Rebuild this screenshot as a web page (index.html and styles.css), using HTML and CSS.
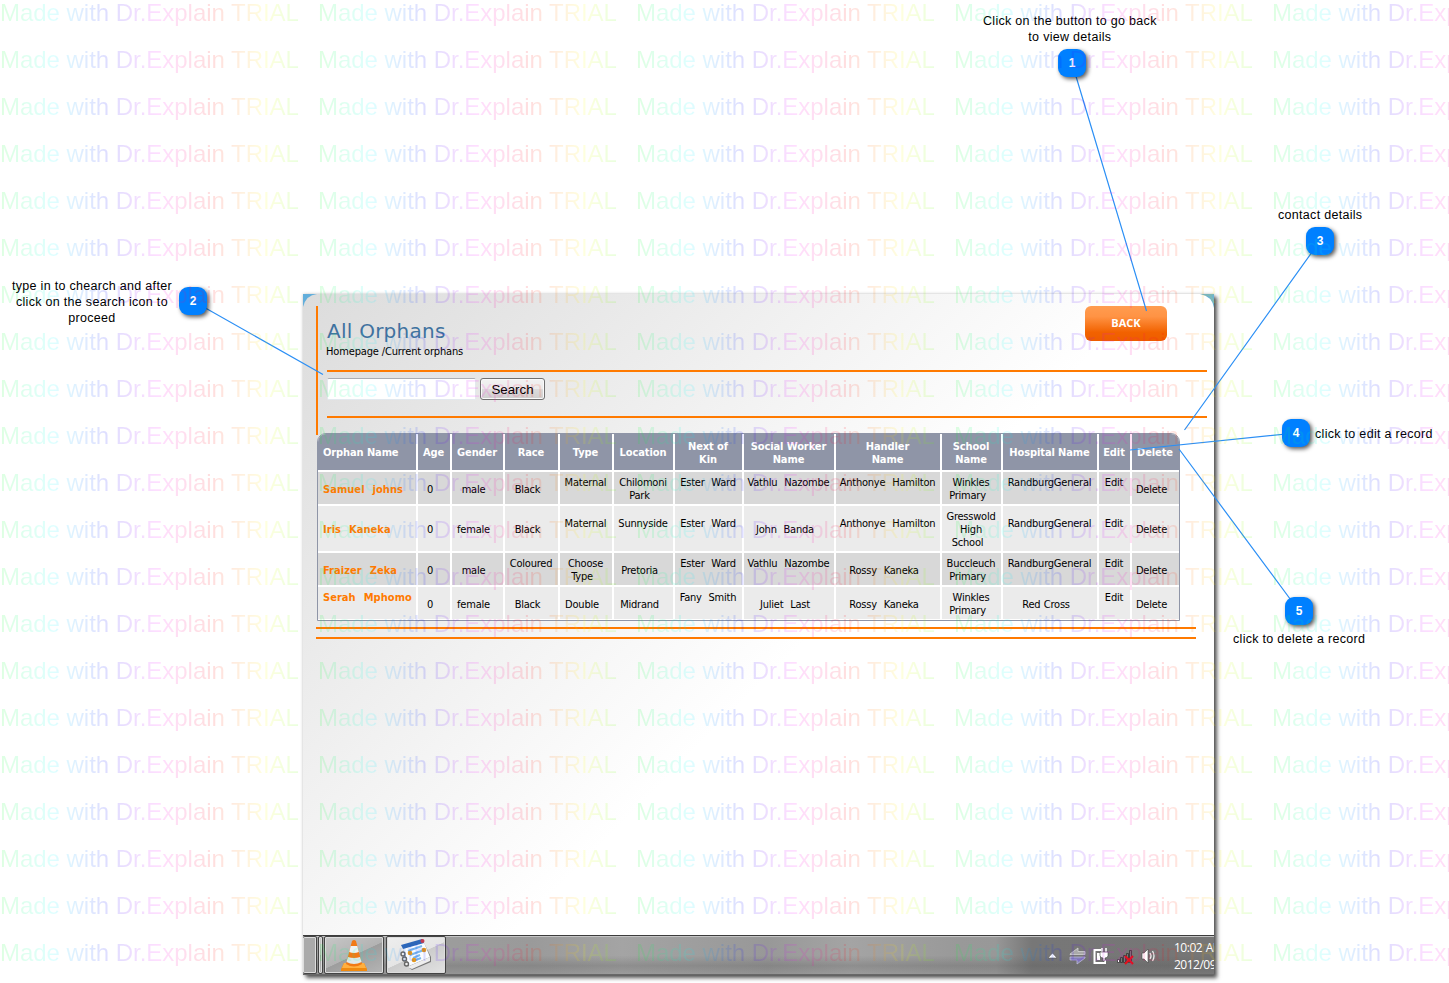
FILE: index.html
```html
<!DOCTYPE html>
<html lang="en">
<head>
<meta charset="utf-8">
<title>All Orphans</title>
<link rel="stylesheet" href="styles.css">
</head>
<body>
<main class="window">
  <svg class="corner" width="14" height="14" viewBox="0 0 14 14"><path d="M0 0H14Q3 1 0 13Z" fill="#62aedb"/></svg>
  <svg class="corner corner-right" width="14" height="14" viewBox="0 0 14 14"><path d="M0 0H14V14Q12 2 0 0Z" fill="#6db4d0"/></svg>
  <div class="content">
    <section class="head">
      <div class="title-row">
        <div>
          <h1>All Orphans</h1>
          <p class="crumbs">Homepage /Current orphans</p>
        </div>
        <button class="back">BACK</button>
      </div>
      <form class="search">
        <input class="query" type="text" aria-label="Search">
        <button class="go" type="button">Search</button>
      </form>
    </section>
    <section class="grid">
      <div class="th left"><b class="w1">Orphan Name</b></div><div class="th"><b>Age</b></div><div class="th"><b>Gender</b></div><div class="th"><b>Race</b></div><div class="th"><b>Type</b></div><div class="th"><b>Location</b></div><div class="th"><b>Next of<br>Kin</b></div><div class="th"><b>Social Worker<br>Name</b></div><div class="th"><b>Handler<br>Name</b></div><div class="th"><b>School<br>Name</b></div><div class="th"><b>Hospital Name</b></div><div class="th"><b>Edit</b></div><div class="th"><b>Delete</b></div>

      <div class="td one left name"><span>Samuel  johns</span></div><div class="td one"><i>0</i></div><div class="td one"><i>male</i></div><div class="td one"><i>Black</i></div><div class="td two"><span>Maternal</span></div><div class="td"><span>Chilomoni</span><i>Park</i></div><div class="td two"><span>Ester  Ward</span></div><div class="td two"><span>Vathlu  Nazombe</span></div><div class="td two"><span>Anthonye  Hamilton</span></div><div class="td"><span>Winkles</span><i>Primary</i></div><div class="td two"><span>RandburgGeneral</span></div><div class="td two"><span>Edit</span></div><div class="td one"><i>Delete</i></div>

      <div class="td alt left name"><span>Iris  Kaneka</span></div><div class="td alt"><i>0</i></div><div class="td alt"><i>female</i></div><div class="td alt"><i>Black</i></div><div class="td alt two mid"><span>Maternal</span></div><div class="td alt two mid"><span>Sunnyside</span></div><div class="td alt two mid"><span>Ester  Ward</span></div><div class="td alt"><i>John  Banda</i></div><div class="td alt two mid"><span>Anthonye  Hamilton</span></div><div class="td alt"><span>Gresswold</span><span>High</span><i>School</i></div><div class="td alt two mid"><span>RandburgGeneral</span></div><div class="td alt two mid"><span>Edit</span></div><div class="td alt"><i>Delete</i></div>

      <div class="td one left name"><span>Fraizer  Zeka</span></div><div class="td one"><i>0</i></div><div class="td one"><i>male</i></div><div class="td two"><span>Coloured</span></div><div class="td"><span>Choose</span><i>Type</i></div><div class="td one"><i>Pretoria</i></div><div class="td two"><span>Ester  Ward</span></div><div class="td two"><span>Vathlu  Nazombe</span></div><div class="td one"><i>Rossy  Kaneka</i></div><div class="td"><span>Buccleuch</span><i>Primary</i></div><div class="td two"><span>RandburgGeneral</span></div><div class="td two"><span>Edit</span></div><div class="td one"><i>Delete</i></div>

      <div class="td alt left name two"><span>Serah  Mphomo</span></div><div class="td alt one"><i>0</i></div><div class="td alt one"><i>female</i></div><div class="td alt one"><i>Black</i></div><div class="td alt one"><i>Double</i></div><div class="td alt one"><i>Midrand</i></div><div class="td alt two"><span>Fany  Smith</span></div><div class="td alt one"><i>Juliet  Last</i></div><div class="td alt one"><i>Rossy  Kaneka</i></div><div class="td alt"><span>Winkles</span><i>Primary</i></div><div class="td alt one"><i>Red Cross</i></div><div class="td alt two"><span>Edit</span></div><div class="td alt one"><i>Delete</i></div>
    </section>
    <div class="rules"></div>
  </div>
  <footer class="taskbar">
    <div class="task sliver"></div>
    <div class="task thin"></div>
    <div class="task vlc">
      <svg width="28" height="32" viewBox="0 0 28 32">
        <path d="M4 24H24L27 30V32H1V30Z" fill="#f08a10"/><path d="M4 24H24L26 29H2Z" fill="#ffb040"/>
        <path d="M12 2Q14 0 16 2L22 25Q14 30 6 25Z" fill="#f17a16"/>
        <path d="M10.700 7H17.300L18.800 13Q14 15 9.200 13Z" fill="#eef2f2"/>
        <path d="M8 18Q14 20 20 18L21.600 23Q14 27 6.500 23Z" fill="#dfe8e8"/>
      </svg>
    </div>
    <div class="task active">
      <svg width="34" height="32" viewBox="0 0 34 32">
        <path d="M4 9L9 28L13 31L32 23V18L24 2Z" fill="#777"/>
        <path d="M8 28L31 18V22L13 30Z" fill="#eee"/>
        <path d="M3 7L24 1L31 18L10 27Z" fill="#fafcff"/>
        <path d="M2 6L23 0L25 4L4 10Z" fill="#2c66b8"/><circle cx="23.500" cy="2" r="2" fill="#c43a50"/>
        <path d="M9 12L23 7M11 16L25 11M14 19L21 16M14 22L22 19" stroke="#77b6ee" stroke-width="2"/>
        <circle cx="11" cy="14" r="2.300" fill="#e79a1c"/><circle cx="25" cy="11" r="2.300" fill="#e79a1c"/><circle cx="15" cy="21" r="2.300" fill="#e79a1c"/>
        <g fill="#eee" stroke="#666" stroke-width="1.400"><circle cx="4" cy="15" r="2"/><circle cx="5.500" cy="20" r="2"/><circle cx="7.500" cy="25" r="2"/></g>
      </svg>
    </div>
    <div class="tray">
      <svg width="110" height="18" viewBox="0 0 110 18">
        <path d="M0 11L4.500 6L9 11Z" fill="#fff" stroke="#555" stroke-width=".6"/>
        <path d="M22 7L30 1V4.500H37V7.500H22Z" fill="#a9a9a9" stroke="#ddd" stroke-width=".7"/>
        <path d="M37 10H22V13H29V17L37 11Z" fill="#8580b8" stroke="#c4c2e0" stroke-width=".7"/>
        <path d="M53 3H46.500V16H57V13" fill="none" stroke="#fff" stroke-width="2"/><path d="M49 6H52V13H49Z" fill="#fff"/>
        <path d="M54 1V5M58 1V5" stroke="#fff" stroke-width="1.500"/><path d="M52 5H60V9Q59 11 57 11V14H55V11Q53 11 52 9Z" fill="#fff" stroke="#444" stroke-width=".6"/>
        <g fill="#777" stroke="#333" stroke-width=".8"><path d="M69.500 12.500h2v3h-2z" fill="#fff"/><path d="M72.500 10.500h2v5h-2zM75.500 8.500h2v7h-2zM78.500 6.500h2v9h-2zM81.500 3.500h2v12h-2z"/></g>
        <path d="M77 9L85 17M85 9L77 17" stroke="#e3101c" stroke-width="2.200"/>
        <path d="M94 6H96L100 2V16L96 12H94Z" fill="#fff" stroke="#444" stroke-width=".6"/>
        <path d="M102 6Q104 9 102 12M104.500 4Q107.500 9 104.500 14" fill="none" stroke="#eee" stroke-width="1.300"/>
      </svg>
    </div>
    <div class="clock">10:02 AM<br>2012/09/12</div>
  </footer>
</main>

<svg class="leaders" width="1449" height="983" viewBox="0 0 1449 983">
  <path d="M1072 63L1146.500 311M193 301L323 374.500M1320 241L1184.500 430M1296 433L1130 450M1299 611L1179 449"/>
</svg>
<div class="badge b1">1</div><p class="note n1">Click on the button to go back<br>to view details</p>
<div class="badge b2">2</div><p class="note n2">type in to chearch and after<br>click on the search icon to<br>proceed</p>
<div class="badge b3">3</div><p class="note n3">contact details</p>
<div class="badge b4">4</div><p class="note n4">click to edit a record</p>
<div class="badge b5">5</div><p class="note n5">click to delete a record</p>
<div class="watermark" id="watermark" aria-hidden="true"></div>
<script src="script.js"></script>
</body>
</html>
```
FILE: styles.css
```css
* { box-sizing: border-box; }
html, body { margin: 0; height: 983px; overflow: hidden; background: #fff; }
body { position: relative; padding: 294px 0 0 303px; }
p, h1 { margin: 0; font-weight: normal; }

.window {
  position: relative;
  display: flex;
  flex-direction: column;
  width: 911px;
  height: 681px;
  background: linear-gradient(135deg, #dcdcdc 0, #e8e8e8 210px, #fff 600px);
  box-shadow: 3px 3px 4px rgba(0, 0, 0, .65), 0 0 3px rgba(0, 0, 0, .2);
}
.corner { position: absolute; top: 0; left: 0; }
.corner-right { left: auto; right: 0; }

.content { flex: 1; padding: 12px 0 0 13px; }
.head { width: 891px; height: 129px; padding-left: 9px; border-left: 2px solid #ff7a00; }
.title-row { display: flex; justify-content: space-between; height: 64px; padding-right: 40px; }
h1 { padding-top: 13px; font: 20px/25px "DejaVu Sans", sans-serif; letter-spacing: .25px; color: #3f729f; }
.crumbs { margin-left: -1px; font: 11px/16px "DejaVu Sans Condensed", sans-serif; letter-spacing: -.15px; white-space: nowrap; }
.back {
  width: 82px; height: 35px; padding: 0 0 2px; border: 0; border-radius: 6px;
  background: linear-gradient(#ff9c50 0, #ff9344 30%, #f26200 75%, #ee5c00);
  color: #fff; font: bold 11px/33px "Open Sans", sans-serif;
}
.search {
  display: flex; gap: 4px; width: 880px; height: 48px; padding-top: 6px;
  border-top: 2px solid #ff7a00; border-bottom: 2px solid #ff7a00;
}
.query { width: 149px; height: 22px; padding: 0; border: 1px solid #e3e9ef; border-top-color: #abadb3; border-radius: 2px; background: #fff; }
.go {
  width: 65px; height: 22px; padding: 0; border: 1px solid #707070; border-radius: 3px;
  box-shadow: inset 0 0 0 1px #fafafa;
  background: linear-gradient(#f2f2f2 0, #ebebeb 49%, #dddddd 50%, #cfcfcf);
  color: #000; font: 13.300px/19px "Liberation Sans", sans-serif;
}

.grid {
  display: grid;
  grid-template-columns: 98px 32px 51px 53px 52px 59px 67px 90px 104px 59px 94px 31px 47px;
  grid-template-rows: 36px 32px 45px 32px 32px;
  gap: 2px;
  width: 863px;
  margin: -2px 0 0 1px;
  padding-bottom: 1px;
  border: 1px solid #8f95a7;
  border-radius: 9px 9px 0 0;
  background: #fff;
  overflow: hidden;
  font: 11px/13px "DejaVu Sans Condensed", sans-serif;
  letter-spacing: -.22px;
  word-spacing: .5px;
  white-space: pre;
}
.th, .td { display: flex; flex-direction: column; align-items: center; justify-content: center; text-align: center; }
.th { padding: 1px 1px 0 0; background: #8f95a7; color: #fff; letter-spacing: -.1px; word-spacing: 0; }
.td { padding: 1px 1px 0 0; background: #d8d8d8; }
.td.alt { background: #ebebeb; }
.td i { padding-right: 7px; font-style: normal; }
.td.one { padding-top: 2px; }
.td.two { padding-bottom: 13px; }
.td.two.mid { padding-top: 2px; }
.th.left, .td.left { align-items: flex-start; padding-left: 5px; }
.name { color: #ff7a00; font-weight: bold; letter-spacing: .05px; }
.rules { width: 880px; height: 12px; margin-top: 6px; border: solid #ff7a00; border-width: 2px 0; }

.taskbar {
  display: flex; align-items: flex-start; height: 40px; overflow: hidden;
  border-top: 1px solid #3c3c3c;
  box-shadow: inset 0 1px #c4c4c4, inset 0 -1px #686868;
  background:
    linear-gradient(transparent 50%, rgba(85, 85, 85, .28) 76%, rgba(130, 130, 130, .2)),
    linear-gradient(90deg, #a0a0a0 0, #9a9a9a 25%, #a4a4a4 35%, #989898 51%, #a4a4a4 60%, #999 72%, #989898 76%, #777 80%, #767676);
}
.task {
  display: flex; align-items: center; justify-content: center;
  height: 38px; margin-top: 0; border: 1px solid #444; border-radius: 2px;
  box-shadow: inset 0 0 0 1px #ddd;
  background: linear-gradient(155deg, #c7c7c7 0, #b3b3b3 50%, #9d9d9d 51%, #b5b5b5);
}
.sliver { width: 14px; border-left: 0; background: #aaa; }
.thin { width: 5px; margin-left: 1px; }
.vlc { width: 60px; margin-left: 1px; }
.active { width: 60px; margin-left: 2px; background: linear-gradient(155deg, #eee 0, #e5e5e5 50%, #ccc 51%, #e2e2e2); }
.tray { margin: 11px 0 0 auto; width: 110px; height: 18px; }
.tray svg { display: block; }
.clock {
  flex: none; width: 40px; margin: 3px 0 0 16px; overflow: hidden; white-space: nowrap;
  color: #fff; font: 12px/17px "Open Sans", sans-serif; letter-spacing: -.5px;
}
.clock::first-line { word-spacing: 1px; }

.leaders { position: absolute; top: 0; left: 0; }
.leaders path { fill: none; stroke: #2b8ff5; stroke-width: 1.200; }
.badge {
  position: absolute; width: 28px; height: 28px; border-radius: 9px;
  background: #0080ff; box-shadow: 2px 2px 4px rgba(0, 0, 0, .65);
  color: #fff; font: bold 12px/28px "Liberation Sans", sans-serif; text-align: center;
}
.b1 { left: 1058px; top: 49px; }
.b2 { left: 179px; top: 287px; }
.b3 { left: 1306px; top: 227px; }
.b4 { left: 1282px; top: 419px; }
.b5 { left: 1285px; top: 597px; }
.note { position: absolute; font: 12.500px/16px "Liberation Sans", sans-serif; letter-spacing: .3px; text-align: center; white-space: nowrap; }
.n1 { left: 983px; top: 13px; }
.n2 { left: 12px; top: 278px; }
.n3 { left: 1278px; top: 207px; }
.n4 { left: 1315px; top: 426px; }
.n5 { left: 1233px; top: 631px; }

.watermark { position: absolute; top: 0; left: 0; width: 1449px; height: 983px; overflow: hidden; pointer-events: none; }
.mark-row { display: flex; width: 1590px; height: 47px; }
.mark-row span {
  flex: none; width: 318px; height: 47px;
  font: 24px/26px "Liberation Sans", sans-serif; letter-spacing: -.03px; white-space: nowrap;
  color: transparent; opacity: .125;
  background: linear-gradient(90deg, #00ff20, #00ffff 53px, #0000ff 106px, #ff00ff 159px, #ff0000 212px, #ffff00 265px, #00ff00);
  -webkit-background-clip: text; background-clip: text;
}
```
FILE: script.js
```js
// Tiles the trial notice over the whole canvas.
const layer = document.getElementById('watermark');
for (let r = 0; r < 21; r++) {
  const row = document.createElement('div');
  row.className = 'mark-row';
  for (let c = 0; c < 5; c++) {
    const mark = document.createElement('span');
    mark.textContent = 'Made with Dr.Explain TRIAL';
    row.appendChild(mark);
  }
  layer.appendChild(row);
}
```
